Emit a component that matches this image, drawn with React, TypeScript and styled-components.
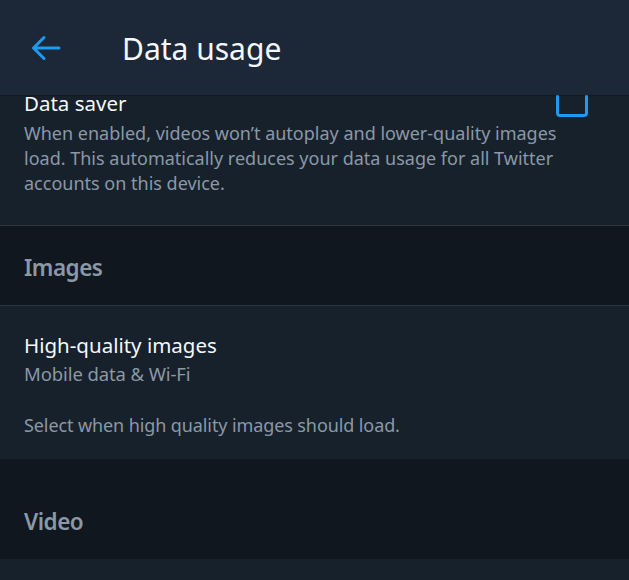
import React, { useState } from "react";
import styled, { createGlobalStyle } from "styled-components";

const GlobalStyle = createGlobalStyle`
  html, body {
    margin: 0;
    padding: 0;
    background: #17212c;
  }
  body {
    font-family: "Noto Sans", "Open Sans", sans-serif;
    -webkit-font-smoothing: antialiased;
  }
`;

const BackArrow: React.FC = () => (
  <svg width="30" height="26" viewBox="0 0 30 26" fill="none">
    <path
      d="M28 13H3M13 2.5L2.5 13L13 23.5"
      stroke="#1d9bf0"
      strokeWidth="3"
      strokeLinecap="round"
      strokeLinejoin="round"
    />
  </svg>
);

const App: React.FC = () => {
  const [dataSaver, setDataSaver] = useState(false);

  return (
    <Screen>
      <GlobalStyle />
      <Header>
        <BackButton aria-label="Back">
          <BackArrow />
        </BackButton>
        <Title>Data usage</Title>
      </Header>
      <Scroller>
        <List>
          <SettingRow>
            <SettingText>
              <SettingTitle>Data saver</SettingTitle>
              <Description>
                When enabled, videos won’t autoplay and lower-quality images
                load. This automatically reduces your data usage for all Twitter
                accounts on this device.
              </Description>
            </SettingText>
            <Checkbox
              $checked={dataSaver}
              onClick={() => setDataSaver((v) => !v)}
              aria-label="Data saver"
            />
          </SettingRow>
          <SectionHeader $top={28}>Images</SectionHeader>
          <SettingRow $plain>
            <SettingText>
              <SettingTitle>High-quality images</SettingTitle>
              <Value>Mobile data &amp; Wi-Fi</Value>
              <Hint>Select when high quality images should load.</Hint>
            </SettingText>
          </SettingRow>
          <SectionHeader $top={48} $noBorder>
            Video
          </SectionHeader>
          <SettingRow $plain />
        </List>
      </Scroller>
    </Screen>
  );
};

export default App;

const Screen = styled.div`
  display: flex;
  flex-direction: column;
  height: 580px;
  overflow: hidden;
  background: #17212c;
`;

const Header = styled.header`
  position: relative;
  z-index: 1;
  flex: 0 0 95px;
  display: flex;
  align-items: center;
  background: #1c2838;
  box-shadow: 0 1px 1px rgba(0, 0, 0, 0.25);
`;

const BackButton = styled.button`
  display: flex;
  align-items: center;
  justify-content: center;
  margin-left: 31px;
  padding: 0;
  border: none;
  background: none;
  cursor: pointer;
`;

const Title = styled.h1`
  margin: 2px 0 0 61px;
  font-size: 30px;
  font-weight: 400;
  color: #f5f8fa;
`;

const Scroller = styled.div`
  flex: 1;
  overflow: hidden;
`;

const List = styled.div`
  margin-top: -21px;
`;

const SettingRow = styled.div<{ $plain?: boolean }>`
  display: flex;
  align-items: flex-start;
  padding: ${(p) => (p.$plain ? "26px 24px 22px" : "16px 41px 29px 24px")};
  min-height: ${(p) => (p.$plain ? "60px" : "auto")};
  background: #17212c;
`;

const SettingText = styled.div`
  flex: 1;
  min-width: 0;
`;

const SettingTitle = styled.div`
  font-size: 20.5px;
  line-height: 26px;
  color: #f5f8fa;
`;

const Description = styled.p`
  margin: 5px 0 0;
  font-size: 18px;
  line-height: 25px;
  color: #8b98a5;
`;

const Value = styled.div`
  margin-top: 4px;
  font-size: 18.5px;
  line-height: 24px;
  letter-spacing: -0.1px;
  color: #8b98a5;
`;

const Hint = styled.div`
  margin-top: 27px;
  font-size: 18px;
  line-height: 24px;
  letter-spacing: -0.1px;
  color: #8b98a5;
`;

const Checkbox = styled.button<{ $checked: boolean }>`
  flex: 0 0 auto;
  width: 32px;
  height: 32px;
  margin: -5px 0 0 -8px;
  padding: 0;
  border: 3px solid #1d9bf0;
  border-radius: 4px;
  background: ${(p) => (p.$checked ? "#1d9bf0" : "transparent")};
  cursor: pointer;
`;

const SectionHeader = styled.div<{ $top: number; $noBorder?: boolean }>`
  padding: ${(p) => p.$top}px 24px 23px;
  background: #10171f;
  border-top: 1px solid ${(p) => (p.$noBorder ? "#10171f" : "#2b3641")};
  border-bottom: ${(p) => (p.$noBorder ? "none" : "1px solid #2b3641")};
  font-size: 22.5px;
  line-height: 28px;
  font-weight: 600;
  letter-spacing: -0.5px;
  color: #8b98a5;
`;
